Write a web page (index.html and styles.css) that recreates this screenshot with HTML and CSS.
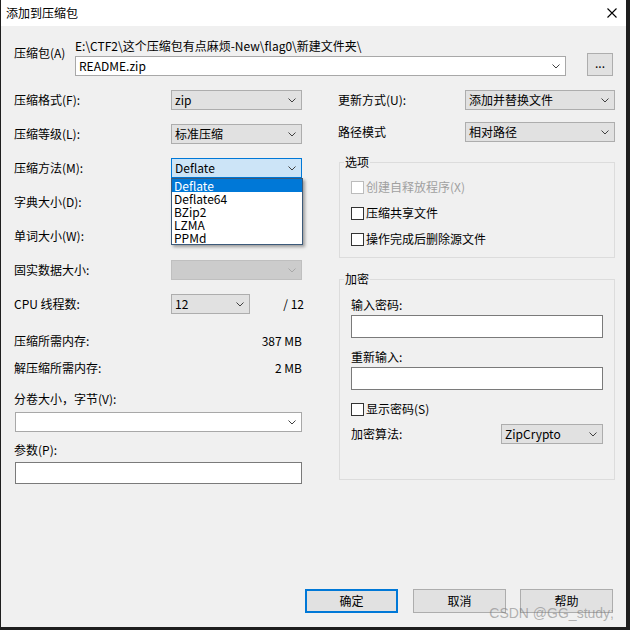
FILE: index.html
```html
<!DOCTYPE html>
<html lang="zh-CN">
<head>
<meta charset="utf-8">
<title>添加到压缩包</title>
<link rel="stylesheet" href="styles.css">
</head>
<body>
<div class="window">
  <div class="titlebar">
    <span class="title">添加到压缩包</span>
    <svg class="close" width="10" height="10" viewBox="0 0 10 10"><path d="M0.5 0.5L9.5 9.5M9.5 0.5L0.5 9.5"/></svg>
  </div>
  <div class="content">
    <div class="archive">
      <span class="arc-label">压缩包(A)</span>
      <span class="path">E:\CTF2\这个压缩包有点麻烦-New\flag0\新建文件夹\</span>
      <div class="combo edit arc-combo"><span>README.zip</span><svg class="chev" width="8" height="5" viewBox="0 0 8 5"><path d="M0.5 0.5L4 4L7.5 0.5"/></svg></div>
      <div class="btn browse">...</div>
    </div>

    <div class="columns">
      <div class="left">
        <div class="frow"><span class="lbl">压缩格式(F):</span><div class="combo"><span>zip</span><svg class="chev" width="8" height="5" viewBox="0 0 8 5"><path d="M0.5 0.5L4 4L7.5 0.5"/></svg></div></div>
        <div class="frow"><span class="lbl">压缩等级(L):</span><div class="combo"><span>标准压缩</span><svg class="chev" width="8" height="5" viewBox="0 0 8 5"><path d="M0.5 0.5L4 4L7.5 0.5"/></svg></div></div>
        <div class="frow"><span class="lbl">压缩方法(M):</span>
          <div class="combo focus"><span>Deflate</span><svg class="chev" width="8" height="5" viewBox="0 0 8 5"><path d="M0.5 0.5L4 4L7.5 0.5"/></svg>
            <ul class="droplist">
              <li class="sel">Deflate</li>
              <li>Deflate64</li>
              <li>BZip2</li>
              <li>LZMA</li>
              <li>PPMd</li>
            </ul>
          </div>
        </div>
        <div class="frow"><span class="lbl">字典大小(D):</span></div>
        <div class="frow"><span class="lbl">单词大小(W):</span></div>
        <div class="frow"><span class="lbl">固实数据大小:</span><div class="combo disabled"><span></span><svg class="chev" width="8" height="5" viewBox="0 0 8 5"><path d="M0.5 0.5L4 4L7.5 0.5"/></svg></div></div>
        <div class="frow"><span class="lbl">CPU 线程数:</span><div class="combo cpu"><span>12</span><svg class="chev" width="8" height="5" viewBox="0 0 8 5"><path d="M0.5 0.5L4 4L7.5 0.5"/></svg></div><span class="total">/ 12</span></div>
        <div class="mrow m1"><span>压缩所需内存:</span><span>387 MB</span></div>
        <div class="mrow m2"><span>解压缩所需内存:</span><span>2 MB</span></div>
        <div class="blabel vol">分卷大小，字节(V):</div>
        <div class="combo edit full"><span></span><svg class="chev" width="8" height="5" viewBox="0 0 8 5"><path d="M0.5 0.5L4 4L7.5 0.5"/></svg></div>
        <div class="blabel par">参数(P):</div>
        <div class="input full par-input"></div>
      </div>

      <div class="right">
        <div class="rrow"><span>更新方式(U):</span><div class="combo rcombo"><span>添加并替换文件</span><svg class="chev" width="8" height="5" viewBox="0 0 8 5"><path d="M0.5 0.5L4 4L7.5 0.5"/></svg></div></div>
        <div class="rrow r2"><span>路径模式</span><div class="combo rcombo"><span>相对路径</span><svg class="chev" width="8" height="5" viewBox="0 0 8 5"><path d="M0.5 0.5L4 4L7.5 0.5"/></svg></div></div>

        <fieldset class="group opts">
          <legend>选项</legend>
          <div class="opts-body">
            <div class="check disabled"><span class="box"></span><span>创建自释放程序(X)</span></div>
            <div class="check"><span class="box"></span><span>压缩共享文件</span></div>
            <div class="check"><span class="box"></span><span>操作完成后删除源文件</span></div>
          </div>
        </fieldset>

        <fieldset class="group enc">
          <legend>加密</legend>
          <div class="enc-body">
            <div class="elabel">输入密码:</div>
            <div class="input pw"></div>
            <div class="elabel second">重新输入:</div>
            <div class="input pw"></div>
            <div class="check show"><span class="box"></span><span>显示密码(S)</span></div>
            <div class="algo"><span>加密算法:</span><div class="combo acombo"><span>ZipCrypto</span><svg class="chev" width="8" height="5" viewBox="0 0 8 5"><path d="M0.5 0.5L4 4L7.5 0.5"/></svg></div></div>
          </div>
        </fieldset>
      </div>
    </div>

    <div class="buttons">
      <div class="btn default">确定</div>
      <div class="btn b2">取消</div>
      <div class="btn b3">帮助</div>
    </div>
  </div>
  <div class="watermark">CSDN @GG_study;</div>
</div>
</body>
</html>
```

FILE: styles.css
```css
* { box-sizing: border-box; }
html, body { margin: 0; padding: 0; background: #1e1e1e; }
body {
  font-family: "Noto Sans CJK SC", "Noto Sans", sans-serif;
  font-size: 12px;
  line-height: 14px;
  color: #000;
}
.window {
  position: relative;
  margin-left: 1px;
  width: 625px;
  height: 627px;
  background: #f0f0f0;
  display: flex;
  flex-direction: column;
}
.titlebar {
  height: 26px;
  flex: none;
  background: #fff;
  display: flex;
  align-items: center;
  justify-content: space-between;
  padding: 0 9px 0 5px;
}
.close path { stroke: #000; stroke-width: 1.1; fill: none; }

.content {
  flex: 1;
  display: flex;
  flex-direction: column;
  padding: 13px 11px 14px 13px;
}

/* archive */
.archive {
  display: grid;
  grid-template-columns: 61px 491px 1fr;
  grid-template-rows: 17px 20px;
}
.arc-label { grid-column: 1; grid-row: 1 / 3; align-self: start; margin-top: 7px; }
.path { grid-column: 2; grid-row: 1; }
.combo.arc-combo { grid-column: 2; grid-row: 2; width: 491px; }
.browse {
  grid-column: 3; grid-row: 1 / 3;
  align-self: end; justify-self: end;
  width: 26px; height: 23px; margin-right: 2px;
  line-height: 18px;
}

/* combos */
.combo {
  position: relative;
  height: 20px;
  width: 131px;
  background: #e1e1e1;
  border: 1px solid #adadad;
  display: flex;
  align-items: center;
  justify-content: space-between;
  padding: 0 5px 0 3px;
}
.combo.edit { background: #fff; border-color: #a8a8a8; padding-left: 3px; }
.combo.focus { background: #cce4f7; border-color: #0078d7; }
.combo.disabled { background: #cccccc; border-color: #bfbfbf; }
.combo.disabled .chev path { stroke: #a8a8a8; }
.chev { flex: none; }
.chev path { stroke: #404040; stroke-width: 1; fill: none; }

.droplist {
  position: absolute;
  top: 19px;
  left: -1px;
  width: 132px;
  margin: 0;
  padding: 0;
  list-style: none;
  background: #fff;
  border: 1px solid #3c5a7a;
  box-shadow: 2px 2px 3px rgba(0,0,0,0.35);
  z-index: 5;
}
.droplist li { height: 13px; line-height: 13px; padding-left: 2px; }
.droplist li.sel { background: #0078d7; color: #fff; }

/* columns */
.columns {
  margin-top: 14px;
  display: grid;
  grid-template-columns: 290px 277px;
  column-gap: 34px;
  align-items: start;
}
.left, .right { display: flex; flex-direction: column; }

.frow {
  height: 20px;
  display: flex;
  align-items: center;
  margin-bottom: 14px;
}
.frow:nth-child(7) { margin-bottom: 0; }
.lbl { width: 157px; flex: none; }
.combo.cpu { width: 79px; }
.total { margin-left: auto; }

.mrow {
  display: flex;
  justify-content: space-between;
  padding-right: 2px;
}
.m1 { margin-top: 20px; }
.m2 { margin-top: 13px; }
.blabel.vol { margin-top: 17px; }
.combo.full { width: 287px; margin-left: 1px; margin-top: 6px; }
.blabel.par { margin-top: 11px; }
.input {
  background: #fff;
  border: 1px solid #7a7a7a;
}
.par-input { width: 287px; height: 22px; margin-left: 1px; margin-top: 5px; }

/* right */
.rrow {
  height: 20px;
  display: flex;
  align-items: center;
  justify-content: space-between;
}
.rrow.r2 { margin-top: 12px; }
.combo.rcombo { width: 150px; }

.group {
  margin: 13px 0 0 1px;
  width: 276px;
  padding: 0;
  border: 1px solid #dcdcdc;
  min-width: 0;
}
.group legend {
  margin-left: 4px;
  padding: 0 1px;
  line-height: 14px;
}
.opts-body { padding: 11px 11px 11px 11px; display: flex; flex-direction: column; gap: 12px; }
.check { display: flex; align-items: center; height: 14px; }
.box {
  width: 13px; height: 13px;
  border: 1px solid #333;
  background: #fff;
  margin-right: 2px;
  flex: none;
}
.check.disabled { color: #a0a0a0; }
.check.disabled .box { border-color: #bcbcbc; }

.group.enc { margin-top: 14px; }
.enc-body { padding: 12px 11px 35px 11px; display: flex; flex-direction: column; }
.input.pw { height: 23px; margin-top: 3px; }
.elabel.second { margin-top: 12px; }
.check.show { margin-top: 12px; }
.algo {
  margin-top: 8px;
  height: 20px;
  display: flex;
  align-items: center;
  justify-content: space-between;
}
.combo.acombo { width: 102px; }

/* buttons */
.btn {
  background: #e1e1e1;
  border: 1px solid #adadad;
  text-align: center;
}
.buttons {
  margin-top: auto;
  display: flex;
  justify-content: flex-end;
  padding-right: 2px;
}
.buttons .btn { width: 93px; height: 24px; line-height: 22px; }
.buttons .btn.default { border: 2px solid #0078d7; line-height: 20px; }
.buttons .b2 { margin-left: 15px; }
.buttons .b3 { margin-left: 14px; }

.watermark {
  position: absolute;
  right: 12px;
  bottom: 6px;
  font-family: "Liberation Sans", Arial, sans-serif;
  font-size: 14px;
  line-height: 15px;
  color: rgba(120,120,120,0.55);
  letter-spacing: 0;
}
```
